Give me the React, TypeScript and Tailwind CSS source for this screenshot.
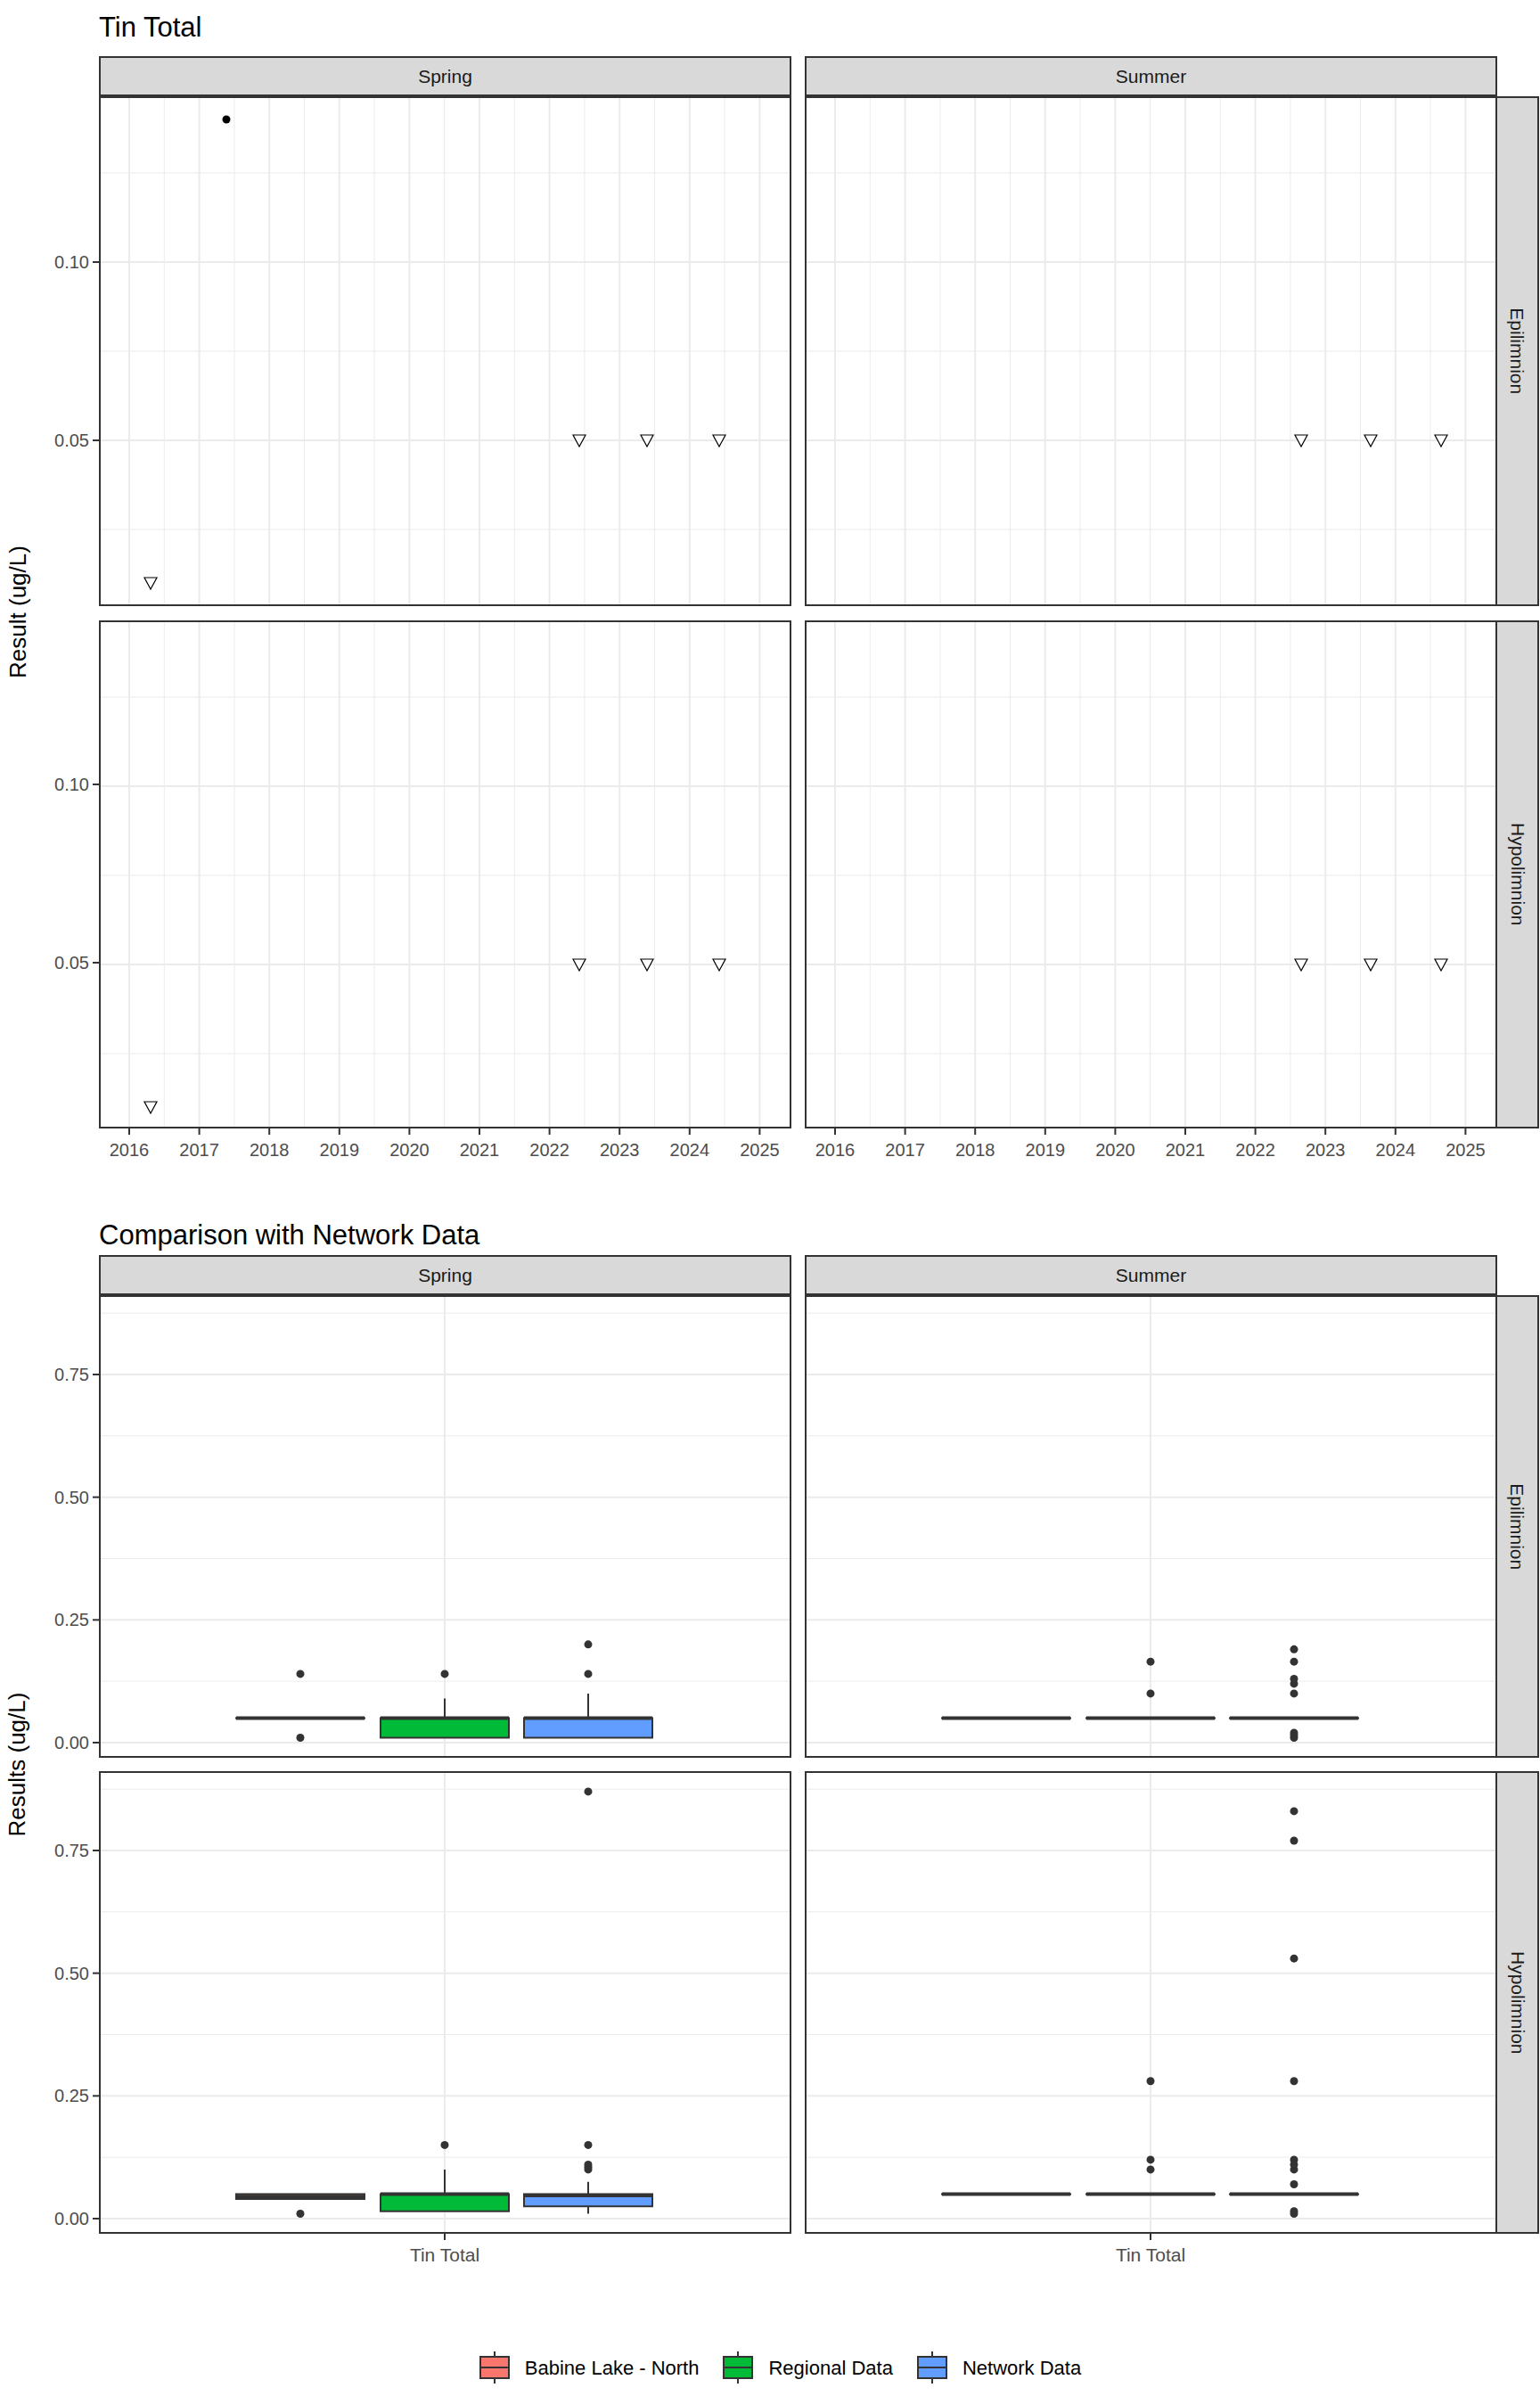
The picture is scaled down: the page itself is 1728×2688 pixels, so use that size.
import React from "react";

const W = 777;
const F = '"Liberation Sans", Arial, sans-serif';

type Pt = { x: number; v: number; kind: "dot" | "tri" };

function tri(x: number, y: number, k: number) {
  return <polygon key={k} points={`${x - 7},${y - 6} ${x + 7},${y - 6} ${x},${y + 7}`} fill="white" stroke="#000" strokeWidth={1.2} />;
}

function TimePanel({ h, pts }: { h: number; pts: Pt[] }) {
  const yv = (v: number) => 186 - (v - 0.1) * 4000;
  const xv = (yr: number) => 34 + (yr - 2016) * 78.6;
  const years = [2016, 2017, 2018, 2019, 2020, 2021, 2022, 2023, 2024, 2025];
  return (
    <svg width={W} height={h} className="block">
      {[0.025, 0.075, 0.125].map((v) => (
        <line key={v} x1={0} x2={W} y1={yv(v)} y2={yv(v)} stroke="#ebebeb" strokeWidth={1} />
      ))}
      {years.map((y) => (
        <line key={"m" + y} x1={xv(y + 0.5)} x2={xv(y + 0.5)} y1={0} y2={h} stroke="#ebebeb" strokeWidth={1} />
      ))}
      {[0.05, 0.1].map((v) => (
        <line key={v} x1={0} x2={W} y1={yv(v)} y2={yv(v)} stroke="#ebebeb" strokeWidth={2} />
      ))}
      {years.map((y) => (
        <line key={y} x1={xv(y)} x2={xv(y)} y1={0} y2={h} stroke="#ebebeb" strokeWidth={2} />
      ))}
      {pts.map((p, i) =>
        p.kind === "dot" ? <circle key={i} cx={p.x} cy={yv(p.v)} r={4.5} fill="#000" /> : tri(p.x, yv(p.v), i)
      )}
      <rect x={1} y={1} width={W - 2} height={h - 2} fill="none" stroke="#333" strokeWidth={2} />
    </svg>
  );
}

type Box = { lo: number; q1: number; med: number; q3: number; hi: number; out: number[]; fill: string };

function BoxPanel({ boxes }: { boxes: Box[] }) {
  const h = 519;
  const yv = (v: number) => 502 - v * 550.7;
  const cx = [226, 388, 549];
  return (
    <svg width={W} height={h} className="block">
      {[0.125, 0.375, 0.625, 0.875].map((v) => (
        <line key={v} x1={0} x2={W} y1={yv(v)} y2={yv(v)} stroke="#ebebeb" strokeWidth={1} />
      ))}
      {[0, 0.25, 0.5, 0.75].map((v) => (
        <line key={v} x1={0} x2={W} y1={yv(v)} y2={yv(v)} stroke="#ebebeb" strokeWidth={2} />
      ))}
      <line x1={388} x2={388} y1={0} y2={h} stroke="#ebebeb" strokeWidth={2} />
      {boxes.map((b, i) => {
        const x = cx[i];
        return (
          <g key={i}>
            <line x1={x} x2={x} y1={yv(b.hi)} y2={yv(b.lo)} stroke="#333" strokeWidth={2} />
            <rect x={x - 72} y={yv(b.q3)} width={144} height={Math.max(yv(b.q1) - yv(b.q3), 0.1)} fill={b.fill} stroke="#333" strokeWidth={2} />
            <line x1={x - 72} x2={x + 72} y1={yv(b.med)} y2={yv(b.med)} stroke="#333" strokeWidth={4} />
            {b.out.map((o, j) => (
              <circle key={j} cx={x} cy={yv(o)} r={4.5} fill="#333" />
            ))}
          </g>
        );
      })}
      <rect x={1} y={1} width={W - 2} height={h - 2} fill="none" stroke="#333" strokeWidth={2} />
    </svg>
  );
}

function YTicks({ h, ticks }: { h: number; ticks: { label: string; y: number }[] }) {
  return (
    <svg width={71} height={h} className="block">
      {ticks.map((t) => (
        <g key={t.label}>
          <text x={60} y={t.y + 7} textAnchor="end" fontSize={20} fill="#4d4d4d" fontFamily={F}>
            {t.label}
          </text>
          <line x1={64} x2={71} y1={t.y} y2={t.y} stroke="#333" strokeWidth={2} />
        </g>
      ))}
    </svg>
  );
}

function Strip({ label }: { label: string }) {
  return (
    <div className="w-[777px] h-[45px] bg-[#d9d9d9] border-2 border-[#333] flex items-center justify-center text-[21px] text-[#1a1a1a]">
      {label}
    </div>
  );
}

function SideStrip({ label, h }: { label: string; h: number }) {
  return (
    <div style={{ height: h }} className="w-[47px] bg-[#d9d9d9] border-2 border-l-0 border-[#333] flex items-center justify-center">
      <span className="rotate-90 whitespace-nowrap text-[21px] text-[#1a1a1a]">{label}</span>
    </div>
  );
}

function XYears() {
  const xv = (yr: number) => 34 + (yr - 2016) * 78.6;
  const years = [2016, 2017, 2018, 2019, 2020, 2021, 2022, 2023, 2024, 2025];
  return (
    <svg width={W} height={44} className="block">
      {years.map((y) => (
        <g key={y}>
          <line x1={xv(y)} x2={xv(y)} y1={0} y2={7} stroke="#333" strokeWidth={2} />
          <text x={xv(y)} y={31} textAnchor="middle" fontSize={20} fill="#4d4d4d" fontFamily={F}>
            {y}
          </text>
        </g>
      ))}
    </svg>
  );
}

function XTin() {
  return (
    <svg width={W} height={44} className="block">
      <line x1={388} x2={388} y1={0} y2={7} stroke="#333" strokeWidth={2} />
      <text x={388} y={31} textAnchor="middle" fontSize={21} fill="#4d4d4d" fontFamily={F}>
        Tin Total
      </text>
    </svg>
  );
}

const yv1 = (v: number) => 186 - (v - 0.1) * 4000;
const t1 = [
  { label: "0.10", y: yv1(0.1) },
  { label: "0.05", y: yv1(0.05) },
];
const yv2 = (v: number) => 502 - v * 550.7;
const t2 = ["0.00", "0.25", "0.50", "0.75"].map((l) => ({ label: l, y: yv2(parseFloat(l)) }));

const RED = "#f8766d";
const GREEN = "#00ba38";
const BLUE = "#619cff";
const flat = (fill: string, out: number[]): Box => ({ lo: 0.05, q1: 0.05, med: 0.05, q3: 0.05, hi: 0.05, out, fill });

function LegendKey({ fill }: { fill: string }) {
  return (
    <svg width={40} height={40} className="block">
      <line x1={20} x2={20} y1={2} y2={38} stroke="#333" strokeWidth={2} />
      <rect x={4} y={8} width={32} height={24} fill={fill} stroke="#333" strokeWidth={2} />
      <line x1={4} x2={36} y1={20} y2={20} stroke="#333" strokeWidth={2} />
    </svg>
  );
}

export default function App() {
  const spE: Pt[] = [
    { x: 58, v: 0.01, kind: "tri" },
    { x: 143, v: 0.14, kind: "dot" },
    { x: 539, v: 0.05, kind: "tri" },
    { x: 615, v: 0.05, kind: "tri" },
    { x: 696, v: 0.05, kind: "tri" },
  ];
  const spH: Pt[] = [
    { x: 58, v: 0.01, kind: "tri" },
    { x: 539, v: 0.05, kind: "tri" },
    { x: 615, v: 0.05, kind: "tri" },
    { x: 696, v: 0.05, kind: "tri" },
  ];
  const su: Pt[] = [
    { x: 557, v: 0.05, kind: "tri" },
    { x: 635, v: 0.05, kind: "tri" },
    { x: 714, v: 0.05, kind: "tri" },
  ];
  return (
    <div className="w-[1728px] h-[2688px] bg-white relative" style={{ fontFamily: F }}>
      {/* Chart 1 */}
      <div className="h-[63px] pl-[111px] flex items-center text-[31px] text-black">Tin Total</div>
      <div className="flex">
        <div className="w-[40px] flex items-center justify-center">
          <span className="-rotate-90 whitespace-nowrap text-[26px] text-black">Result (ug/L)</span>
        </div>
        <div className="flex flex-col">
          <div className="flex pl-[71px] gap-[15px]">
            <Strip label="Spring" />
            <Strip label="Summer" />
          </div>
          <div className="flex">
            <YTicks h={572} ticks={t1} />
            <TimePanel h={572} pts={spE} />
            <div className="w-[15px]" />
            <TimePanel h={572} pts={su} />
            <SideStrip label="Epilimnion" h={572} />
          </div>
          <div className="h-[16px]" />
          <div className="flex">
            <YTicks h={570} ticks={t1.map((t) => ({ ...t, y: t.y - 2 }))} />
            <TimePanel h={570} pts={spH} />
            <div className="w-[15px]" />
            <TimePanel h={570} pts={su} />
            <SideStrip label="Hypolimnion" h={570} />
          </div>
          <div className="flex pl-[71px] gap-[15px]">
            <XYears />
            <XYears />
          </div>
        </div>
      </div>

      {/* Chart 2 */}
      <div className="h-[54px]" />
      <div className="h-[44px] pl-[111px] flex items-center text-[31px] text-black">Comparison with Network Data</div>
      <div className="flex">
        <div className="w-[40px] flex items-center justify-center">
          <span className="-rotate-90 whitespace-nowrap text-[26px] text-black">Results (ug/L)</span>
        </div>
        <div className="flex flex-col">
          <div className="flex pl-[71px] gap-[15px]">
            <Strip label="Spring" />
            <Strip label="Summer" />
          </div>
          <div className="flex">
            <YTicks h={519} ticks={t2} />
            <BoxPanel
              boxes={[
                flat(RED, [0.14, 0.01]),
                { lo: 0.01, q1: 0.01, med: 0.05, q3: 0.05, hi: 0.09, out: [0.14], fill: GREEN },
                { lo: 0.01, q1: 0.01, med: 0.05, q3: 0.05, hi: 0.1, out: [0.14, 0.2], fill: BLUE },
              ]}
            />
            <div className="w-[15px]" />
            <BoxPanel
              boxes={[
                flat(RED, []),
                flat(GREEN, [0.1, 0.165]),
                flat(BLUE, [0.01, 0.015, 0.02, 0.1, 0.12, 0.13, 0.165, 0.19]),
              ]}
            />
            <SideStrip label="Epilimnion" h={519} />
          </div>
          <div className="h-[15px]" />
          <div className="flex">
            <YTicks h={519} ticks={t2} />
            <BoxPanel
              boxes={[
                { lo: 0.04, q1: 0.04, med: 0.045, q3: 0.05, hi: 0.05, out: [0.01], fill: RED },
                { lo: 0.015, q1: 0.015, med: 0.05, q3: 0.05, hi: 0.1, out: [0.15], fill: GREEN },
                { lo: 0.01, q1: 0.025, med: 0.047, q3: 0.05, hi: 0.075, out: [0.1, 0.105, 0.11, 0.15, 0.87], fill: BLUE },
              ]}
            />
            <div className="w-[15px]" />
            <BoxPanel
              boxes={[
                flat(RED, []),
                flat(GREEN, [0.1, 0.12, 0.28]),
                flat(BLUE, [0.01, 0.015, 0.07, 0.1, 0.11, 0.12, 0.28, 0.53, 0.77, 0.83]),
              ]}
            />
            <SideStrip label="Hypolimnion" h={519} />
          </div>
          <div className="flex pl-[71px] gap-[15px]">
            <XTin />
            <XTin />
          </div>
        </div>
      </div>
      <div className="h-[86px]" />
      <div className="flex justify-center items-center gap-[24px] text-[22px] text-black pl-[20px]">
        <div className="flex items-center gap-[14px]">
          <LegendKey fill={RED} />
          <span>Babine Lake - North</span>
        </div>
        <div className="flex items-center gap-[14px]">
          <LegendKey fill={GREEN} />
          <span>Regional Data</span>
        </div>
        <div className="flex items-center gap-[14px]">
          <LegendKey fill={BLUE} />
          <span>Network Data</span>
        </div>
      </div>
    </div>
  );
}
